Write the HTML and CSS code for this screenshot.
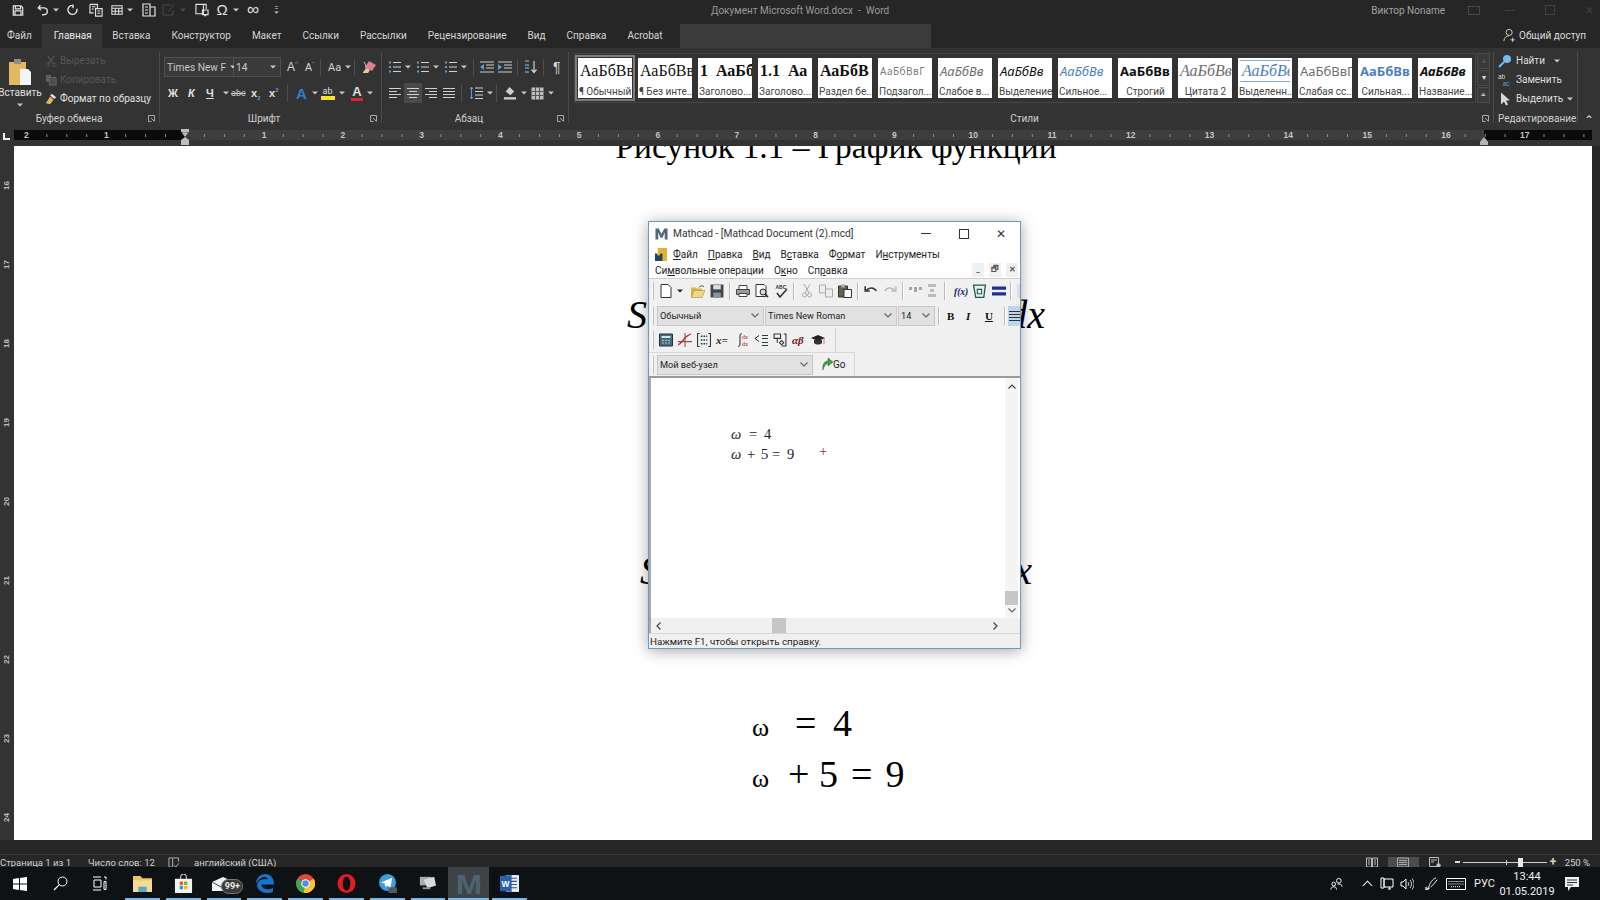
FILE: index.html
```html
<!DOCTYPE html>
<html lang="ru">
<head>
<meta charset="utf-8">
<title>Документ Microsoft Word.docx - Word</title>
<link rel="stylesheet" href="styles.css">
</head>
<body>
<svg class="defs" width="0" height="0">
<defs>
<symbol id="save" viewBox="0 0 14 14"><path d="M1.5 1.5h9l2 2v9h-11zM4 1.5v3.5h6v-3.5M3.5 12.5v-5h7v5" fill="none" stroke="currentColor" stroke-width="1.4"/></symbol>
<symbol id="undo" viewBox="0 0 14 14"><path d="M4 1.5l-2.5 3 3 2.5M2 4.500h6a4 4 0 0 1 0 8H6" fill="none" stroke="currentColor" stroke-width="1.6"/></symbol>
<symbol id="redo" viewBox="0 0 14 14"><path d="M7.500 1.500h-1a5.300 5.300 0 1 0 5 4M7 0.500v4.500" fill="none" stroke="currentColor" stroke-width="1.6"/></symbol>
<symbol id="docs" viewBox="0 0 16 14"><path d="M1 1h8v4M1 1v9h4M3 3.500h4M3 6h2M7 5.500h7v8H7zM9 8h3M9 10.500h3" fill="none" stroke="currentColor" stroke-width="1.2"/></symbol>
<symbol id="table" viewBox="0 0 14 14"><path d="M1 2h12v10H1zM1 5h12M1 8.500h12M5 5v7M9 5v7" fill="none" stroke="currentColor" stroke-width="1.200"/></symbol>
<symbol id="box" viewBox="0 0 14 14"><path d="M1 1h7v12H1zM8 4h5v9H8M3 4h3M3 7h3M3 10h3" fill="none" stroke="currentColor" stroke-width="1.200"/></symbol>
<symbol id="pen" viewBox="0 0 14 14"><path d="M1 2h8M1 2v10h10V7M6 9l6-7" fill="none" stroke="currentColor" stroke-width="1"/></symbol>
<symbol id="boxdev" viewBox="0 0 15 14"><path d="M1 1h8v10H1zM9 1h3v5M8 7h6v5H8zM10 13h2" fill="none" stroke="currentColor" stroke-width="1.200"/></symbol>
<symbol id="caretd" viewBox="0 0 6 4"><path d="M0 0.500h6L3 3.500z" fill="currentColor"/></symbol>
<symbol id="list" viewBox="0 0 14 14"><path d="M1 2.500h2M1 7h2M1 11.500h2" stroke="#5e9bd0" stroke-width="2" fill="none"/><path d="M5 2.500h8M5 7h8M5 11.500h8" stroke="currentColor" stroke-width="1.200" fill="none"/></symbol>
<symbol id="indentl" viewBox="0 0 14 12"><path d="M0 1h14M6 4h8M6 7h8M0 11h14" stroke="currentColor" fill="none"/><path d="M4 3v6L0 6z" fill="#5e9bd0"/></symbol>
<symbol id="indentr" viewBox="0 0 14 12"><path d="M0 1h14M6 4h8M6 7h8M0 11h14" stroke="currentColor" fill="none"/><path d="M0 3v6l4-3z" fill="#5e9bd0"/></symbol>
<symbol id="sort" viewBox="0 0 14 14"><path d="M1 1h4M1 5h4M1 8h4M1 12h4" stroke="#5e9bd0" stroke-width="1.500" fill="none"/><path d="M10 1v11M7.500 9.500l2.500 3 2.500-3" stroke="currentColor" stroke-width="1.200" fill="none"/></symbol>
<symbol id="alignl" viewBox="0 0 14 12"><path d="M1 1.500h12M1 4.500h8M1 7.500h12M1 10.500h8" stroke="currentColor" fill="none"/></symbol>
<symbol id="alignc" viewBox="0 0 14 12"><path d="M1 1.500h12M3 4.500h8M1 7.500h12M3 10.500h8" stroke="currentColor" fill="none"/></symbol>
<symbol id="alignr" viewBox="0 0 14 12"><path d="M1 1.500h12M5 4.500h8M1 7.500h12M5 10.500h8" stroke="currentColor" fill="none"/></symbol>
<symbol id="alignj" viewBox="0 0 14 12"><path d="M1 1.500h12M1 4.500h12M1 7.500h12M1 10.500h12" stroke="currentColor" fill="none"/></symbol>
<symbol id="spacing" viewBox="0 0 14 14"><path d="M6 2h8M6 5.500h8M6 9h8M6 12.500h8" stroke="currentColor" fill="none"/><path d="M2.500 1v12M1 3l1.500-2 1.500 2M1 11l1.500 2 1.500-2" stroke="#5e9bd0" fill="none"/></symbol>
<symbol id="fill" viewBox="0 0 15 15"><path d="M7 1l5 5-4 4-5-4z" fill="#cfcfcf"/><path d="M1 12h13v2.500H1z" fill="#d0d0d0"/></symbol>
<symbol id="grid" viewBox="0 0 13 13"><path d="M0.500 0.500h12v12h-12z" fill="#bdbdbd"/><path d="M0.500 4.500h12M0.500 8.500h12M4.500 0.500v12M8.500 0.500v12" stroke="#555" fill="none"/></symbol>
<symbol id="eraser" viewBox="0 0 16 16"><path d="M8 2L15 6 11 12 4 8z" fill="#e07f86"/><path d="M2 13l4-4 3 2-2 3H2z" fill="#e9c7a0"/><path d="M3 3c2 3 3 5 1 9" stroke="#c9c9c9" fill="none"/></symbol>
<symbol id="scissor" viewBox="0 0 14 14"><path d="M3 1l7 9M11 1L4 10" stroke="currentColor" stroke-width="1.200" fill="none"/><circle cx="3" cy="11.500" r="2" fill="none" stroke="currentColor"/><circle cx="11" cy="11.500" r="2" fill="none" stroke="currentColor"/></symbol>
<symbol id="copy" viewBox="0 0 14 14"><path d="M1 1h6v8H1z" fill="#5f5f5f"/><path d="M5 4h8v9H5z" fill="#4c4c4c" stroke="#6a6a6a"/></symbol>
<symbol id="brush" viewBox="0 0 14 14"><path d="M8 1l5 4-2 2-5-4z" fill="#e3e3e3"/><path d="M6 4l4 4-4 5-5-1z" fill="#e7b458"/></symbol>
<symbol id="paste" viewBox="0 0 24 28"><path d="M1 4h17v23H1z" fill="#e2b862"/><path d="M6 1h7v5H6z" fill="#8d8d8d"/><path d="M12 11h8l3 3v13H12z" fill="#f5f5f5"/></symbol>
<symbol id="launch" viewBox="0 0 7 7"><path d="M0.500 0.500h6v6M0.500 0.500v6h3" stroke="#a8a8a8" fill="none"/><path d="M3 3l3 3" stroke="#a8a8a8"/></symbol>
<symbol id="find" viewBox="0 0 14 14"><circle cx="9" cy="5" r="4" fill="#7fb7e4"/><path d="M6 8l-5 5" stroke="#7fb7e4" stroke-width="2"/></symbol>
<symbol id="replace" viewBox="0 0 15 14"><text x="0" y="6" font-size="7" fill="#d8d8d8" font-family="Liberation Sans">ab</text><text x="5" y="13" font-size="7" fill="#5e9bd0" font-family="Liberation Sans">ac</text></symbol>
<symbol id="cursor" viewBox="0 0 12 14"><path d="M2 0.500v12l3-3 2 4 2-1-2-4h4z" fill="#d9d9d9"/></symbol>
<symbol id="person" viewBox="0 0 16 16"><circle cx="7" cy="5" r="3.500" fill="none" stroke="currentColor"/><path d="M1 15c0-4 3-6 6-6M11 11v5M8.500 13.500h5" stroke="currentColor" fill="none"/></symbol>
<symbol id="win" viewBox="0 0 14 14"><path d="M0 2l6-1v5.500H0zM7 1l7-1v6.500H7zM0 7.500h6V13L0 12zM7 7.500h7V14l-7-1z" fill="#fff"/></symbol>
<symbol id="search" viewBox="0 0 15 15"><circle cx="9.500" cy="5.500" r="4.500" fill="none" stroke="#fff"/><path d="M6.300 8.700L1 14" stroke="#fff" stroke-width="1.200"/></symbol>
<symbol id="tview" viewBox="0 0 15 15"><path d="M1 1h8M1 14h8M2 4h7v7H2zM12 1h2v2.500M12 5.500h2v8h-2z" stroke="#fff" fill="none"/></symbol>
<symbol id="folder" viewBox="0 0 18 16"><path d="M0 1h7l2 2h9v13H0z" fill="#e8c56a"/><path d="M0 5h18v11H0z" fill="#f5dc94"/><path d="M5 11h8v5H5z" fill="#5aa9c2"/></symbol>
<symbol id="store" viewBox="0 0 20 20"><path d="M7 5V3a3 3 0 0 1 6 0v2" fill="none" stroke="#fff"/><path d="M1 5h18v15H1z" fill="#f2f2f2"/><path d="M6 8h3.500v3.500H6z" fill="#f25022"/><path d="M10.500 8H14v3.500h-3.500z" fill="#7fba00"/><path d="M6 12.500h3.500V16H6z" fill="#00a4ef"/><path d="M10.500 12.500H14V16h-3.500z" fill="#ffb900"/></symbol>
<symbol id="mail" viewBox="0 0 22 14"><path d="M0 5L11 0l11 5v9H0z" fill="#f2f2f2"/><path d="M0 5l11 6 11-6" fill="none" stroke="#444"/></symbol>
<symbol id="edge" viewBox="0 0 18 18"><path d="M1 9C1 3 6 0 10 0c5 0 8 4 8 10H6c0 4 6 6 11 3v4c-6 2-14 1-15-6 0-3 2-5 5-6h5c0-3-6-4-11 4z" fill="#1774cc"/></symbol>
<symbol id="chrome" viewBox="0 0 20 20"><circle cx="10" cy="10" r="10" fill="#e2463a"/><path d="M10 10L1.500 5A10 10 0 0 0 8 19.800z" fill="#3ea453"/><path d="M10 10l8.700-5A10 10 0 0 1 8 19.800z" fill="#f5c43a"/><circle cx="10" cy="10" r="4.500" fill="#fff"/><circle cx="10" cy="10" r="3.400" fill="#4a8ef0"/></symbol>
<symbol id="opera" viewBox="0 0 20 20"><ellipse cx="10" cy="10" rx="9.500" ry="10" fill="#e01c24"/><ellipse cx="10" cy="10" rx="4" ry="7.500" fill="#0e1113"/></symbol>
<symbol id="tg" viewBox="0 0 20 20"><circle cx="10" cy="9" r="9" fill="#3a9fdd"/><path d="M3 9l12-5-2 11-3-3-2 2-1-4z" fill="#fff"/><path d="M11 14h9v6h-9z" fill="#55585a"/></symbol>
<symbol id="pc" viewBox="0 0 20 20"><path d="M2 3h12v9H2z" fill="#a5adb2"/><path d="M6 6l11-3 2 9-9 3z" fill="#d6dadd"/><path d="M5 14h8v2H5z" fill="#8a9499"/></symbol>
<symbol id="mbig" viewBox="0 0 26 22"><text x="0" y="21" font-size="28" font-family="Liberation Sans" font-weight="700" fill="#52707f" textLength="26" lengthAdjust="spacingAndGlyphs">M</text></symbol>
<symbol id="word" viewBox="0 0 18 18"><path d="M6 1h12v16H6z" fill="#e7edf5"/><path d="M9 4h7M9 7h7M9 10h7M9 13h7" stroke="#2b5797"/><path d="M0 2l11-1v16L0 16z" fill="#2b5fb0"/><text x="1.500" y="12" font-size="8" font-weight="700" font-family="Liberation Sans" fill="#fff">W</text></symbol>
<symbol id="people" viewBox="0 0 14 14"><circle cx="9.500" cy="3.500" r="2.500" fill="none" stroke="#fff"/><circle cx="4" cy="7" r="2" fill="none" stroke="#fff"/><path d="M1 13c0-2 1-3 3-3s3 1 3 3M8 7c2 0 5 0 5 3" fill="none" stroke="#fff"/></symbol>
<symbol id="net" viewBox="0 0 14 14"><path d="M4 2h9v8H4zM8 12h3M9.500 10v2" fill="none" stroke="#fff"/><path d="M1 1h3v10H1z" fill="none" stroke="#fff"/></symbol>
<symbol id="vol" viewBox="0 0 14 14"><path d="M1 5h2l3-3v10l-3-3H1z" fill="none" stroke="#fff"/><path d="M8 5a3 3 0 0 1 0 4M10 3a6 6 0 0 1 0 8M12 1.500a8 8 0 0 1 0 11" fill="none" stroke="#fff" stroke-width=".8"/></symbol>
<symbol id="inkpen" viewBox="0 0 15 15"><path d="M13 1c-4 1-7 6-8 10M14 3c-2 3-5 6-7 8M5 11l-1 3M1 13c3 2 3-3 1-2s2 3 4 1" fill="none" stroke="#fff"/></symbol>
<symbol id="kbd" viewBox="0 0 20 12"><path d="M0.500 0.500h19v11h-19z" fill="none" stroke="#fff"/><path d="M2.500 3.500h15M2.500 6h15M5 8.700h10" stroke="#fff" stroke-dasharray="1 1" fill="none"/></symbol>
<symbol id="notify" viewBox="0 0 14 14"><path d="M0 0h14v10H6l-3 4v-4H0z" fill="#f0f0f0"/><path d="M2 3h10M2 5.500h10M2 8h6" stroke="#333"/></symbol>
<symbol id="read" viewBox="0 0 12 11"><path d="M0.500 1h5v9h-5zM6.500 1h5v9h-5z" fill="none" stroke="#bbb"/><path d="M2 3h2M2 5h2M2 7h2M8 3h2M8 5h2M8 7h2" stroke="#bbb"/></symbol>
<symbol id="print" viewBox="0 0 12 10"><path d="M0.500 0.500h11v9h-11zM2 3h8M2 5h8M2 7h8" fill="none" stroke="#aaa"/></symbol>
<symbol id="web" viewBox="0 0 12 11"><path d="M0.500 0.500h9v9h-9zM2 3h6M2 5h3" fill="none" stroke="#bbb"/><circle cx="9.500" cy="8.500" r="2.200" fill="#bbb"/></symbol>
<symbol id="lang" viewBox="0 0 12 12"><path d="M0.500 1h4v10h-4zM5 1h6v4M6 9l2 2 3-4" fill="none" stroke="#bbb"/></symbol>
<symbol id="mlogo" viewBox="0 0 14 13"><path d="M0.500 1h3.500l3 6 3-6h3.500v12h-3V5.500L8 11H6L3.500 5.500V13h-3z" fill="#4d6a7e"/></symbol>
<symbol id="mmenu" viewBox="0 0 14 14"><path d="M3 0h10v14H3z" fill="#e1b23a"/><path d="M0 6h2l2 3 2-3h2v8H0z" fill="#25445a"/></symbol>
<symbol id="mnew" viewBox="0 0 12 14"><path d="M1 0.500h7l3 3v10H1z" fill="#fff" stroke="#333"/></symbol>
<symbol id="mopen" viewBox="0 0 14 13"><path d="M0 3h5l1 1h5v2H4l-2 6H0z" fill="#d9b64c"/><path d="M3 6h11l-3 7H0z" fill="#f2d97f" stroke="#8c7a2e" stroke-width=".5"/><path d="M8 3c1-2 3-2 5-1" stroke="#3f6f2e" fill="none"/></symbol>
<symbol id="msave" viewBox="0 0 13 13"><path d="M0.500 0.500h12v12h-12z" fill="#3f474d"/><path d="M3 1h7v4H3z" fill="#d9dde0"/><path d="M3 8h7v5H3z" fill="#8b949a"/></symbol>
<symbol id="mprint" viewBox="0 0 14 13"><path d="M3 1h8v4H3z" fill="#fff" stroke="#444"/><path d="M0.500 5h13v5h-13z" fill="#9b9b9b" stroke="#444"/><path d="M3 9h8v3H3z" fill="#fff" stroke="#444"/></symbol>
<symbol id="mprev" viewBox="0 0 14 14"><path d="M1 0.500h8l2 2v10H1z" fill="#fff" stroke="#333"/><circle cx="8" cy="8" r="3" fill="#cde" stroke="#222"/><path d="M10 10l3 3" stroke="#222" stroke-width="1.500"/></symbol>
<symbol id="mspell" viewBox="0 0 14 14"><text x="1.500" y="5" font-size="5" font-weight="700" fill="#333" font-family="Liberation Sans">ABC</text><path d="M3 9l3 4 7-8" stroke="#333" stroke-width="1.600" fill="none"/></symbol>
<symbol id="mcut" viewBox="0 0 10 14"><path d="M2 0l5 9M8 0L3 9" stroke="#aaa" fill="none"/><circle cx="2.500" cy="11" r="2" fill="none" stroke="#aaa"/><circle cx="7.500" cy="11" r="2" fill="none" stroke="#aaa"/></symbol>
<symbol id="mcopy" viewBox="0 0 14 13"><path d="M0.500 0.500h6v8h-6zM6.500 4.500h7v8h-7z" fill="#eee" stroke="#aaa"/></symbol>
<symbol id="mpaste" viewBox="0 0 14 14"><path d="M0.500 2h9v11h-9z" fill="#66604e" stroke="#333"/><path d="M3 0.500h4v3H3z" fill="#aaa"/><path d="M6 5.500h7.500v8H6z" fill="#fff" stroke="#333"/></symbol>
<symbol id="mundo" viewBox="0 0 12 10"><path d="M1 1v4h4M1.500 5c2-3 7-4 9 0" fill="none" stroke="#2e3438" stroke-width="1.300"/></symbol>
<symbol id="mredo" viewBox="0 0 12 10"><path d="M11 1v4H7M10.500 5c-2-3-7-4-9 0" fill="none" stroke="#bbb" stroke-width="1.300"/></symbol>
<symbol id="mdist" viewBox="0 0 14 8"><path d="M0 0h3v3H0zM5 0h3v5H5zM10 0h3v3h-3z" fill="#9aa"/></symbol>
<symbol id="mdistv" viewBox="0 0 8 14"><path d="M0 0h8v3H0zM2 5h4v3H2zM0 10h8v3H0z" fill="#bbb"/></symbol>
<symbol id="mfx" viewBox="0 0 14 12"><text x="0" y="10" font-size="9.500" font-style="italic" font-weight="700" fill="#13235c" font-family="Liberation Serif">f(x)</text></symbol>
<symbol id="mcup" viewBox="0 0 13 13"><path d="M0.500 1h11l-1.500 11.500H2.500z" fill="#e4f1ee" stroke="#1f5a50" stroke-width="1.200"/><path d="M4 5h4v4H4z" fill="none" stroke="#1f5a50"/></symbol>
<symbol id="meq" viewBox="0 0 11 9"><path d="M0 1h11v2.500H0zM0 5.500h11V8H0z" fill="#1b2f9a"/></symbol>
<symbol id="mcalc" viewBox="0 0 14 13"><path d="M0.500 0.500h13v12h-13z" fill="#456b80" stroke="#1f3441"/><path d="M2.500 2.500h9v2h-9z" fill="#cfe3ea"/><path d="M3 7h8M3 9.500h8" stroke="#9fc3d1" stroke-dasharray="2 1"/></symbol>
<symbol id="mgraph" viewBox="0 0 13 13"><path d="M6.500 0v13M0 8h13" stroke="#8a5050"/><path d="M0 11c4-1 5-8 12-10" stroke="#c03030" fill="none" stroke-width="1.200"/></symbol>
<symbol id="mmatrix" viewBox="0 0 13 13"><path d="M2.500 0.500h-2v12h2M10.500 0.500h2v12h-2" stroke="#333" fill="none"/><path d="M3.500 3h6M3.500 6.500h6M3.500 10h6" stroke="#234" stroke-width="1.500" stroke-dasharray="1.500 1"/></symbol>
<symbol id="mint" viewBox="0 0 14 14"><path d="M3 13c1 1 2 0 2-2V3c0-2 1-3 2-2" stroke="#222" fill="none"/><text x="7" y="6" font-size="6" fill="#a02020" font-family="Liberation Serif">dx</text><text x="7" y="13" font-size="6" fill="#a02020" font-family="Liberation Serif">dx</text></symbol>
<symbol id="mineq" viewBox="0 0 14 13"><path d="M5 2L1 5l4 3" stroke="#222" fill="none"/><path d="M8 2h6M8 5h6M8 9h6M8 12h6" stroke="#244" stroke-width="1.200"/></symbol>
<symbol id="mprog" viewBox="0 0 13 13"><path d="M1 1h6v4H1zM6 9l2-2 2 2-2 2zM10 1h2v11h-4M4 5v4" fill="none" stroke="#333"/></symbol>
<symbol id="mgreek" viewBox="0 0 14 12"><text x="0" y="10" font-size="11" font-style="italic" font-weight="700" fill="#7a1515" font-family="Liberation Serif">αβ</text></symbol>
<symbol id="mhat" viewBox="0 0 14 12"><path d="M7 1L0 4l7 3 7-3z" fill="#222"/><path d="M3 6v3c2 2 6 2 8 0V6" fill="#333"/><path d="M13 4v6" stroke="#c77"/></symbol>
<symbol id="mgo" viewBox="0 0 12 13"><path d="M2 12C1 6 4 3 7 3V0l5 4-5 4V5.500C5 5.500 3 8 2 12z" fill="#3ea03e" stroke="#1e5c1e" stroke-width=".5"/></symbol>
<symbol id="chev-u" viewBox="0 0 8 5"><path d="M0.500 4.500L4 1l3.500 3.500" fill="none" stroke="#444" stroke-width="1.200"/></symbol>
<symbol id="chev-d" viewBox="0 0 8 5"><path d="M0.500 0.500L4 4l3.500-3.500" fill="none" stroke="#666" stroke-width="1.200"/></symbol>
<symbol id="chev-l" viewBox="0 0 5 8"><path d="M4.500 0.500L1 4l3.500 3.500" fill="none" stroke="#444" stroke-width="1.200"/></symbol>
<symbol id="chev-r" viewBox="0 0 5 8"><path d="M0.500 0.500L4 4 0.500 7.500" fill="none" stroke="#444" stroke-width="1.200"/></symbol>
</defs>
</svg>

<div class="app">
  <header class="titlebar">
    <div class="qat">
      <svg class="q q-save"><use href="#save"/></svg>
      <svg class="q q-undo"><use href="#undo"/></svg><svg class="cd"><use href="#caretd"/></svg>
      <svg class="q q-redo"><use href="#redo"/></svg>
      <svg class="q q-docs"><use href="#docs"/></svg>
      <svg class="q q-table"><use href="#table"/></svg><svg class="cd"><use href="#caretd"/></svg>
      <svg class="q q-box"><use href="#box"/></svg>
      <svg class="q q-pen"><use href="#pen"/></svg><svg class="cd dim"><use href="#caretd"/></svg>
      <svg class="q q-boxdev"><use href="#boxdev"/></svg>
      <span class="q-omega">Ω</span><svg class="cd"><use href="#caretd"/></svg>
      <span class="q-inf">∞</span>
      <span class="q-more">=<svg class="cd"><use href="#caretd"/></svg></span>
    </div>
    <div class="doc-title">Документ Microsoft Word.docx  -  Word</div>
    <div class="win-ctrl">
      <span class="user">Виктор Noname</span>
      <span class="ctl-ribbon"></span>
      <span class="ctl-min"></span>
      <span class="ctl-max"></span>
      <span class="ctl-close">✕</span>
    </div>
  </header>

  <nav class="tabs">
    <span class="tab tab-first">Файл</span>
    <span class="tab tab-on">Главная</span>
    <span class="tab">Вставка</span>
    <span class="tab">Конструктор</span>
    <span class="tab">Макет</span>
    <span class="tab">Ссылки</span>
    <span class="tab">Рассылки</span>
    <span class="tab">Рецензирование</span>
    <span class="tab">Вид</span>
    <span class="tab">Справка</span>
    <span class="tab">Acrobat</span>
    <div class="tell"></div>
    <div class="share"><svg class="share-i"><use href="#person"/></svg>Общий доступ</div>
  </nav>

  <section class="ribbon">
    <div class="grp g-clip">
      <div class="grp-body clip-body">
        <div class="paste">
          <svg class="paste-i"><use href="#paste"/></svg>
          <span>Вставить</span>
          <svg class="cd"><use href="#caretd"/></svg>
        </div>
        <div class="clip-list">
          <div class="clip-row off"><svg class="ci"><use href="#scissor"/></svg>Вырезать</div>
          <div class="clip-row off"><svg class="ci"><use href="#copy"/></svg>Копировать</div>
          <div class="clip-row"><svg class="ci"><use href="#brush"/></svg>Формат по образцу</div>
        </div>
      </div>
      <div class="grp-label l-clip"><span>Буфер обмена</span><svg class="launch"><use href="#launch"/></svg></div>
    </div>

    <div class="grp g-font">
      <div class="grp-body rows">
        <div class="row r-font1">
          <div class="fname">Times New F<svg class="cd"><use href="#caretd"/></svg></div>
          <div class="fsize">14<svg class="cd"><use href="#caretd"/></svg></div>
          <span class="fa fa-up">A<sup>^</sup></span>
          <span class="fa fa-dn">A<sup>ˇ</sup></span>
          <i class="vsep"></i>
          <span class="fcase">Aa<svg class="cd"><use href="#caretd"/></svg></span>
          <i class="vsep"></i>
          <svg class="rb16"><use href="#eraser"/></svg>
        </div>
        <div class="row r-font2">
          <b class="fb w-zh">Ж</b>
          <b class="fb fit w-k">К</b>
          <b class="fb under w-ch">Ч</b><svg class="cd"><use href="#caretd"/></svg>
          <span class="fstrike">abc</span>
          <b class="fb w-x">x<sub>2</sub></b>
          <b class="fb w-x2">x<sup>2</sup></b>
          <i class="vsep"></i>
          <b class="tfx">A</b><svg class="cd"><use href="#caretd"/></svg>
          <span class="hl"><small>ab</small><i></i></span><svg class="cd"><use href="#caretd"/></svg>
          <span class="fcolor">A<i></i></span><svg class="cd"><use href="#caretd"/></svg>
        </div>
      </div>
      <div class="grp-label l-font"><span>Шрифт</span><svg class="launch"><use href="#launch"/></svg></div>
    </div>

    <div class="grp g-para">
      <div class="grp-body rows">
        <div class="row r-para1">
          <svg class="p14 li"><use href="#list"/></svg><svg class="cd"><use href="#caretd"/></svg>
          <svg class="p14 li"><use href="#list"/></svg><svg class="cd"><use href="#caretd"/></svg>
          <svg class="p14 li"><use href="#list"/></svg><svg class="cd"><use href="#caretd"/></svg>
          <i class="vsep"></i>
          <svg class="p14"><use href="#indentl"/></svg>
          <svg class="p14"><use href="#indentr"/></svg>
          <i class="vsep"></i>
          <svg class="p14"><use href="#sort"/></svg>
          <i class="vsep"></i>
          <span class="pilcrow">¶</span>
        </div>
        <div class="row r-para2">
          <span class="al"><svg class="p14"><use href="#alignl"/></svg></span>
          <span class="al al-on"><svg class="p14"><use href="#alignc"/></svg></span>
          <span class="al"><svg class="p14"><use href="#alignr"/></svg></span>
          <span class="al"><svg class="p14"><use href="#alignj"/></svg></span>
          <i class="vsep vs-a"></i>
          <svg class="p14"><use href="#spacing"/></svg><svg class="cd"><use href="#caretd"/></svg>
          <i class="vsep vs-b"></i>
          <svg class="p14"><use href="#fill"/></svg><svg class="cd"><use href="#caretd"/></svg>
          <svg class="p13"><use href="#grid"/></svg><svg class="cd"><use href="#caretd"/></svg>
        </div>
      </div>
      <div class="grp-label l-para"><span>Абзац</span><svg class="launch"><use href="#launch"/></svg></div>
    </div>

    <div class="grp g-styles">
      <div class="grp-body styles-body">
        <div class="gallery">
          <div class="st st-on"><span class="s-t serif">АаБбВвГ</span><span class="s-l">¶ Обычный</span></div>
          <div class="st"><span class="s-t serif">АаБбВвГ</span><span class="s-l">¶ Без инте...</span></div>
          <div class="st"><span class="s-t serif bold">1 &nbsp;АаБб</span><span class="s-l">Заголово...</span></div>
          <div class="st"><span class="s-t serif bold">1.1 &nbsp;Аа</span><span class="s-l">Заголово...</span></div>
          <div class="st"><span class="s-t serif bold big">АаБбВ</span><span class="s-l">Раздел бе...</span></div>
          <div class="st"><span class="s-t sm-gray">АаБбВвГ</span><span class="s-l">Подзагол...</span></div>
          <div class="st"><span class="s-t it gray">АаБбВв</span><span class="s-l">Слабое в...</span></div>
          <div class="st"><span class="s-t it">АаБбВв</span><span class="s-l">Выделение</span></div>
          <div class="st"><span class="s-t it blue">АаБбВв</span><span class="s-l">Сильное...</span></div>
          <div class="st"><span class="s-t bold">АаБбВв</span><span class="s-l ctr">Строгий</span></div>
          <div class="st"><span class="s-t serif it gray">АаБбВв</span><span class="s-l ctr">Цитата 2</span></div>
          <div class="st"><span class="s-t serif it blue lined">АаБбВв</span><span class="s-l">Выделенн...</span></div>
          <div class="st"><span class="s-t gray caps">АаБбВвГ</span><span class="s-l">Слабая сс...</span></div>
          <div class="st"><span class="s-t blue bold caps">АаБбВв</span><span class="s-l ctr">Сильная...</span></div>
          <div class="st"><span class="s-t it bold">АаБбВв</span><span class="s-l">Название...</span></div>
        </div>
        <div class="gal-btns">
          <span class="gb">▴</span><span class="gb">▾</span><span class="gb">⩡</span>
        </div>
      </div>
      <div class="grp-label l-styles"><span>Стили</span><svg class="launch"><use href="#launch"/></svg></div>
    </div>

    <div class="grp g-edit">
      <div class="grp-body edit-body">
        <div class="ed"><svg class="ei"><use href="#find"/></svg>Найти<svg class="cd ed-cd"><use href="#caretd"/></svg></div>
        <div class="ed"><svg class="ei"><use href="#replace"/></svg>Заменить</div>
        <div class="ed"><svg class="ei"><use href="#cursor"/></svg>Выделить<svg class="cd"><use href="#caretd"/></svg></div>
      </div>
      <div class="grp-label edit-label"><span>Редактирование</span></div>
    </div>
    <div class="collapse"><span>⌃</span></div>
  </section>

  <div class="hruler">
    <span class="corner"></span>
    <div class="rstrip">
      <span class="rn rn-first">2</span>
      <span class="rn">1</span>
      <span class="rn rn-zero"></span>
      <span class="rn">1</span><span class="rn">2</span><span class="rn">3</span><span class="rn">4</span><span class="rn">5</span><span class="rn">6</span><span class="rn">7</span><span class="rn">8</span><span class="rn">9</span><span class="rn">10</span><span class="rn">11</span><span class="rn">12</span><span class="rn">13</span><span class="rn">14</span><span class="rn">15</span><span class="rn">16</span><span class="rn">17</span>
    </div>
    <i class="slider sl-left"></i>
    <i class="slider sl-right"></i>
  </div>

  <main class="workspace">
    <aside class="vruler">
      <span class="vn">16</span><span class="vn">17</span><span class="vn">18</span><span class="vn">19</span><span class="vn">20</span><span class="vn">21</span><span class="vn">22</span><span class="vn">23</span><span class="vn">24</span>
    </aside>
    <article class="page">
      <p class="caption">Рисунок 1.1 – График функции</p>
      <p class="formula f1"><i>S</i><i>dx</i></p>
      <p class="formula f2"><i>S</i><i>x</i></p>
      <div class="eq">
        <div class="eq-row e1"><span class="om">ω</span><span class="e-eq">=</span><span class="e-4">4</span></div>
        <div class="eq-row e2"><span class="om">ω</span><span class="e-pl">+</span><span class="e-5">5</span><span class="e-eq2">=</span><span class="e-9">9</span></div>
      </div>
    </article>
    <div class="vscroll"></div>
  </main>

  <footer class="statusbar">
    <span class="sb-a">Страница 1 из 1</span>
    <span class="sb-b">Число слов: 12</span>
    <svg class="sb-i"><use href="#lang"/></svg>
    <span class="sb-c">английский (США)</span>
    <div class="sb-right">
      <svg class="sb-v"><use href="#read"/></svg>
      <span class="sb-on"><svg class="sb-v"><use href="#print"/></svg></span>
      <svg class="sb-v"><use href="#web"/></svg>
      <span class="z-minus"></span>
      <span class="z-track"><i class="z-mid"></i><i class="z-thumb"></i></span>
      <span class="z-plus">+</span>
      <span class="z-val">250 %</span>
    </div>
  </footer>

  <footer class="taskbar">
    <svg class="tb t-win"><use href="#win"/></svg>
    <svg class="tb t-search"><use href="#search"/></svg>
    <svg class="tb t-view"><use href="#tview"/></svg>
    <span class="task run"><svg class="tb-app"><use href="#folder"/></svg></span>
    <span class="task run"><svg class="tb-app"><use href="#store"/></svg></span>
    <span class="task run t-mail"><svg class="tb-mail"><use href="#mail"/></svg><b class="badge">99+</b></span>
    <span class="task run"><svg class="tb-app"><use href="#edge"/></svg></span>
    <span class="task run"><svg class="tb-app"><use href="#chrome"/></svg></span>
    <span class="task run"><svg class="tb-app"><use href="#opera"/></svg></span>
    <span class="task run"><svg class="tb-app"><use href="#tg"/></svg></span>
    <span class="task run"><svg class="tb-app"><use href="#pc"/></svg></span>
    <span class="task run active"><svg class="tb-m"><use href="#mbig"/></svg></span>
    <span class="task run"><svg class="tb-app"><use href="#word"/></svg></span>
    <div class="tray">
      <svg class="tr tr-people"><use href="#people"/></svg>
      <span class="tr-caret"></span>
      <svg class="tr tr-net"><use href="#net"/></svg>
      <svg class="tr tr-vol"><use href="#vol"/></svg>
      <svg class="tr tr-pen"><use href="#inkpen"/></svg>
      <svg class="tr-kbd"><use href="#kbd"/></svg>
      <span class="tr-lang">РУС</span>
      <span class="clock"><span>13:44</span><span>01.05.2019</span></span>
      <svg class="tr tr-note"><use href="#notify"/></svg>
    </div>
  </footer>

  <div class="mc">
    <div class="mc-title">
      <svg class="mc-logo"><use href="#mlogo"/></svg>
      <span class="mc-name">Mathcad - [Mathcad Document (2).mcd]</span>
      <span class="mc-min"></span><span class="mc-max"></span><span class="mc-x">✕</span>
    </div>
    <div class="mc-menu m1">
      <svg class="mc-logo"><use href="#mmenu"/></svg>
      <span><u>Ф</u>айл</span><span><u>П</u>равка</span><span><u>В</u>ид</span><span>В<u>с</u>тавка</span><span>Ф<u>о</u>рмат</span><span>И<u>н</u>струменты</span>
    </div>
    <div class="mc-menu m2">
      <span>Си<u>м</u>вольные операции</span><span>О<u>к</u>но</span><span>Сп<u>р</u>авка</span>
      <div class="mdi"><b>_</b><b>🗗</b><b>✕</b></div>
    </div>
    <div class="mc-tb t1">
      <i class="grip"></i>
      <svg class="m-ic"><use href="#mnew"/></svg><svg class="cd m-cd"><use href="#caretd"/></svg>
      <svg class="m-ic"><use href="#mopen"/></svg><svg class="m-ic"><use href="#msave"/></svg>
      <i class="msep"></i>
      <svg class="m-ic"><use href="#mprint"/></svg><svg class="m-ic"><use href="#mprev"/></svg><svg class="m-ic"><use href="#mspell"/></svg>
      <i class="msep"></i>
      <svg class="m-ic"><use href="#mcut"/></svg><svg class="m-ic"><use href="#mcopy"/></svg><svg class="m-ic"><use href="#mpaste"/></svg>
      <i class="msep"></i>
      <svg class="m-ic"><use href="#mundo"/></svg><svg class="m-ic"><use href="#mredo"/></svg>
      <i class="msep"></i>
      <svg class="m-ic"><use href="#mdist"/></svg><svg class="m-ic m-dv"><use href="#mdistv"/></svg>
      <i class="msep sep-fx"></i>
      <svg class="m-ic"><use href="#mfx"/></svg><svg class="m-ic"><use href="#mcup"/></svg><svg class="m-ic m-eq"><use href="#meq"/></svg>
      <i class="msep"></i>
      <i class="m-cut"></i>
    </div>
    <div class="mc-tb t2">
      <i class="grip"></i>
      <div class="combo c-style">Обычный<svg class="cv"><use href="#chev-d"/></svg></div>
      <div class="combo c-font">Times New Roman<svg class="cv"><use href="#chev-d"/></svg></div>
      <div class="combo c-size">14<svg class="cv"><use href="#chev-d"/></svg></div>
      <i class="msep sep-t2"></i>
      <b class="mf">B</b><b class="mf mi">I</b><b class="mf mu">U</b>
      <i class="msep sep-t2b"></i>
      <span class="m-align"><svg class="m-ic"><use href="#alignj"/></svg></span>
    </div>
    <div class="mc-tb t3">
      <div class="t3-in">
        <i class="grip"></i>
        <svg class="m-ic"><use href="#mcalc"/></svg><svg class="m-ic"><use href="#mgraph"/></svg><svg class="m-ic"><use href="#mmatrix"/></svg>
        <span class="m-xeq">x=</span>
        <svg class="m-ic"><use href="#mint"/></svg><svg class="m-ic"><use href="#mineq"/></svg><svg class="m-ic"><use href="#mprog"/></svg><svg class="m-ic"><use href="#mgreek"/></svg><svg class="m-ic"><use href="#mhat"/></svg>
      </div>
    </div>
    <div class="mc-tb t4">
      <div class="t4-in">
        <i class="grip"></i>
        <div class="combo c-web">Мой веб-узел<svg class="cv"><use href="#chev-d"/></svg></div>
        <svg class="m-go"><use href="#mgo"/></svg><span class="go">Go</span>
      </div>
    </div>
    <div class="mc-work">
      <div class="mc-main">
        <div class="sheet">
          <div class="m-line l1"><i>ω</i><span class="s1">=</span><span class="s2">4</span></div>
          <div class="m-line l2"><i>ω</i><span class="s3">+</span><span class="s4">5</span><span class="s5">=</span><span class="s6">9</span><span class="mc-cross">+</span></div>
        </div>
        <div class="mc-vs">
          <svg class="cu"><use href="#chev-u"/></svg>
          <i class="mc-vthumb"></i>
          <svg class="cu"><use href="#chev-d"/></svg>
        </div>
      </div>
      <div class="mc-hs">
        <svg class="cl"><use href="#chev-l"/></svg>
        <i class="mc-hthumb"></i>
        <svg class="cl"><use href="#chev-r"/></svg>
      </div>
    </div>
    <div class="mc-status">Нажмите F1, чтобы открыть справку.</div>
  </div>
</div>
</body>
</html>
```

FILE: styles.css
```css
*{box-sizing:border-box}
html,body{margin:0;padding:0}
body{background:#1e1e1e;font-family:Roboto,"Noto Sans",sans-serif}
.defs{position:absolute}
.app{position:relative;width:1600px;height:900px;overflow:hidden;display:flex;flex-direction:column;background:#262626;color:#d6d6d6}

/* title bar */
.titlebar{height:24px;background:#262626;display:grid;grid-template-columns:1fr auto 1fr;align-items:center;flex:none;padding-bottom:10px}
.doc-title{font-size:10px;color:#9a9a9a;white-space:pre}
.qat{display:flex;align-items:center;padding-left:12px;color:#e3e3e3}
.q{width:14px;height:14px;flex:none}
.q-save{width:12px;height:13px}
.q-undo{margin-left:13px;width:12px}
.q-redo{margin-left:8px;width:12px}
.q-docs{margin-left:10px;width:15px}
.q-table{margin-left:7px;width:12px}
.q-box{margin-left:9px}
.q-pen{margin-left:6px;color:#4b4b4b}
.q-boxdev{margin-left:9px}
.cd{width:6px;height:4px;flex:none;margin-left:4px;color:#c8c8c8}
.cd.dim{color:#4b4b4b}
.q-omega{font:15px/16px "Liberation Sans",sans-serif;margin-left:6px;width:14px;text-align:center}
.q-inf{font:17px/20px "Liberation Sans",sans-serif;margin-left:7px;width:14px;text-align:center}
.q-more{margin-left:14px;display:flex;flex-direction:column;font-size:7px;line-height:5px;align-items:center}
.q-more .cd{margin:0;width:5px;height:3px}
.win-ctrl{display:flex;align-items:center;justify-content:flex-end;color:#a3a3a3;font-size:10px;height:16px}
.user{margin-right:23px}
.ctl-ribbon{width:12px;height:9px;border:1px solid #4a4a4a;margin-right:25px}
.ctl-min{width:10px;height:1px;background:#3f3f3f;margin-right:30px}
.ctl-max{width:10px;height:10px;border:1px solid #3f3f3f;margin-right:30px}
.ctl-close{color:#3f3f3f;font-size:11px;width:15px}

/* tabs */
.tabs{height:24px;display:flex;align-items:stretch;font-size:10px;flex:none;background:#262626;color:#d5d5d5}
.tab{display:flex;align-items:center;padding:0 10.500px 2px;white-space:nowrap}
.tab-first{padding:0 10px 2px 7px}
.tab-on{background:#353535;color:#e8e8e8;padding:0 10px 2px 12px}
.tell{width:251px;background:#3b3b3b;margin-left:7px}
.share{margin-left:auto;display:flex;align-items:center;padding:0 14px 2px 0;color:#dcdcdc}
.share-i{width:14px;height:14px;margin-right:2px}

/* ribbon */
.ribbon{height:81px;background:#333;display:flex;flex:none;font-size:10px}
.grp{display:flex;flex-direction:column;flex:none;position:relative}
.grp::after{content:"";position:absolute;right:0;top:4px;bottom:6px;width:1px;background:#4b4b4b}
.grp-body{height:62px}
.grp-label{height:16px;display:flex;align-items:center;justify-content:center;font-size:10px;color:#cfcfcf;position:relative}
.l-clip{padding-right:22px}
.l-font{padding-right:14px}
.l-para{padding-right:13px}
.l-styles{padding-right:14px}
.launch{position:absolute;right:5px;top:5px;width:7px;height:7px}
.g-clip{width:160px}
.g-font{width:222px}
.g-para{width:187px}
.g-styles{width:925px}
.g-edit{width:84px}
.collapse{flex:1;display:flex;align-items:flex-end;justify-content:center;font-size:12px;padding-bottom:2px}
.clip-body{display:flex}
.paste{width:40px;display:flex;flex-direction:column;align-items:center;padding-top:10px;font-size:10px;color:#e0e0e0}
.paste-i{width:24px;height:28px;margin-bottom:1px}
.paste .cd{margin:5px 0 0}
.clip-list{padding:3px 0 0 5px;font-size:10px}
.clip-row{height:19px;display:flex;align-items:center;white-space:nowrap;color:#e0e0e0}
.clip-row.off{color:#565656}
.ci{width:12px;height:12px;margin-right:3px;flex:none}

.rows{padding:9px 0 0 4px;display:flex;flex-direction:column;gap:6px}
.row{height:20px;display:flex;align-items:center;flex:none;white-space:nowrap}
.vsep{width:1px;height:17px;background:#4d4d4d;flex:none}
.fname,.fsize{height:20px;border:1px solid #505050;background:#3a3a3a;font-size:10.200px;display:flex;align-items:center;padding-left:2px;justify-content:space-between;padding-right:4px;color:#c8c8c8}
.fname{width:70px}
.fsize{width:47px;border-left:0}
.fa{font-size:12px;font-family:"Liberation Sans",sans-serif;color:#d6d6d6;display:inline-flex}
.fa sup{font-size:7px;line-height:8px;color:#5e9bd0}
.fa-up{margin-left:6px;width:16px}
.fa-dn{margin-left:2px;width:9px;font-size:10.500px}
.r-font1 .vsep{margin:0 6px}
.fcase{font-size:11px;display:inline-flex;align-items:center;margin-left:1px;width:20px}
.rb16{width:16px;height:16px;flex:none}
.fb{font:700 11px "Liberation Sans",sans-serif;color:#e0e0e0}
.w-zh{margin-left:4px;width:20px}
.w-k{width:18px}
.fit{font-style:italic}
.under{text-decoration:underline;width:13px}
.fstrike{font-size:9px;text-decoration:line-through;margin-left:2px;width:20px;color:#d0d0d0}
.w-x{width:18px}
.w-x2{width:16px}
.fb sub,.fb sup{font-size:6px;line-height:0;color:#5e9bd0}
.r-font2 .vsep{margin:0 8px 0 2px}
.tfx{font:700 15px "Liberation Sans",sans-serif;color:#2f7ecb;width:12px}
.hl{display:inline-flex;flex-direction:column;width:15px;margin-left:2px;align-items:center;line-height:9px}
.hl small{font-size:9px;color:#dedede}
.hl i{width:14px;height:4px;background:#f2e233}
.fcolor{display:inline-flex;flex-direction:column;width:12px;margin-left:6px;align-items:center;font:700 13px/12px "Liberation Sans",sans-serif;color:#ddd}
.fcolor i{width:12px;height:3px;background:#d8262e}
.p14{width:14px;height:14px;flex:none;color:#d0d0d0}
.p13{width:13px;height:13px;flex:none;margin-left:4px}
.r-para1{padding-left:2px}
.r-para1 .p14{margin-right:4px}
.r-para1 .li{margin-right:0}
.r-para1 .cd{margin:0 5px 0 3px}
.r-para1 .vsep{margin:0 6px 0 1px}
.pilcrow{font:14px "Liberation Sans",sans-serif;margin-left:3px}
.al{width:18px;height:20px;display:flex;align-items:center;justify-content:center;flex:none}
.al-on{background:#4a4a4a}
.vs-a{margin:0 7px 0 3px}
.vs-b{margin:0 6px 0 3px}
.styles-body{display:flex;padding:5px 0 0 5px}
.gallery{width:902px;height:50px;border:1px solid #464646;display:flex;gap:6px;padding:4px 3px}
.st{width:54px;height:40px;background:#fff;flex:none;display:flex;flex-direction:column;color:#111;overflow:hidden;outline:0}
.st-on{outline:2px solid #7d7d7d;outline-offset:1px}
.s-t{height:27px;line-height:26px;font-size:13px;white-space:nowrap;overflow:hidden;padding-left:2px;font-family:"Noto Sans",sans-serif;flex:none}
.serif{font-family:"Liberation Serif",serif;font-size:16px}
.bold{font-weight:700}
.big{font-size:16px}
.it{font-style:italic}
.gray{color:#6f6f6f}
.blue{color:#4f81bd}
.sm-gray{font-size:10px;color:#7b7b7b;letter-spacing:.5px}
.caps{font-size:13px}
.lined{border-top:1px solid #8aa7cc;border-bottom:1px solid #8aa7cc;height:22px;line-height:20px;margin:2px 2px 3px}
.s-l{font-size:10px;line-height:13px;color:#444;white-space:nowrap;overflow:hidden;padding-left:1px}
.ctr{text-align:center}
.gal-btns{width:13px;margin-left:1px;display:flex;flex-direction:column;gap:1px}
.gb{height:16px;background:#3a3a3a;border:1px solid #4a4a4a;font:8px/14px "Liberation Sans",sans-serif;text-align:center;color:#ddd}
.gb:first-child{color:#555}
.edit-body{padding:3px 0 0 4px;font-size:10px}
.ed{height:19px;display:flex;align-items:center;color:#dedede;white-space:nowrap}
.ei{width:14px;height:14px;margin-right:4px;flex:none}
.ed-cd{margin-left:9px}
.edit-label{justify-content:flex-start;padding-left:4px;white-space:nowrap}

/* rulers */
.hruler{height:17px;flex:none;display:flex;background:#333;color:#c8c8c8;position:relative}
.corner{width:14px;height:16px;background:#333;flex:none;position:relative}
.corner::before{content:"";position:absolute;left:3px;top:4px;width:5px;height:5px;border-left:2px solid #eee;border-bottom:2px solid #eee}
.rstrip{flex:none;width:1578px;height:10px;margin-top:1px;display:flex;font:700 8.500px/11px "Liberation Sans",sans-serif;color:#c4c4c4;background-image:
 linear-gradient(90deg,transparent 0 19px,#8a8a8a 19px 20px,transparent 20px 39px,#8a8a8a 39px 40px,transparent 40px 59px,#8a8a8a 59px 60px,transparent 60px),
 linear-gradient(90deg,#0b0b0b 0 171px,#3e3e3e 171px 1470px,#0b0b0b 1470px);
 background-size:78.800px 3px,100% 100%;background-position:171px 4px,0 0;background-repeat:repeat-x,no-repeat}
.rn{width:78.800px;text-align:center;flex:none}
.rn-first{width:53px;text-align:left;padding-left:10px}
.slider{position:absolute;top:0;width:8px;height:16px}
.sl-left{left:181px;background:linear-gradient(#bdbdbd 0 3px,#8a8a8a 3px 4px,#bdbdbd 4px);clip-path:polygon(0 0,100% 0,100% 15%,50% 50%,100% 68%,100% 100%,0 100%,0 68%,50% 50%,0 15%)}
.sl-right{left:1480px;background:#b5b5b5;clip-path:polygon(50% 50%,100% 80%,100% 100%,0 100%,0 80%)}
.workspace{flex:none;height:694px;display:flex;background:#262626}
.vruler{width:14px;flex:none;background:#333;display:flex;flex-direction:column;color:#bdbdbd}
.vn{height:79px;flex:none;font:700 8px/14px "Liberation Sans",sans-serif;writing-mode:vertical-rl;transform:rotate(180deg);text-align:center}
.page{width:1578px;flex:none;background:#fff;color:#000;font-family:"Liberation Serif",serif;padding-left:66px;display:flex;flex-direction:column;align-items:center;overflow:hidden}
.page p{margin:0}
.caption{font-size:33.500px;line-height:40px;margin-top:-19px!important;white-space:nowrap}
.formula{display:flex;justify-content:space-between;font-size:40px;line-height:46px}
.f1{width:418px;margin-top:125px!important}
.f2{width:392px;margin-top:210px!important}
.eq{align-self:flex-start;margin-left:672px;margin-top:106px}
.eq-row{display:flex;align-items:baseline;font-size:38px;line-height:47px}
.om{font-size:26px;width:18px}
.e-eq{margin-left:25px;width:21px}
.e-4{margin-left:17px}
.e-pl{margin-left:18px;width:22px}
.e-5{margin-left:9px}
.e-eq2{margin-left:13px}
.e-9{margin-left:13px}
.vscroll{flex:1;background:#262626}

/* status */
.statusbar{height:27px;flex:none;padding-top:17px;display:flex;align-items:center;font-size:9.500px;background:linear-gradient(#262626 0 14px,#3a3a3a 14px 15px,#262626 15px);color:#cfcfcf;white-space:nowrap}
.sb-a{width:88px}
.sb-b{width:80px}
.sb-i{width:12px;height:11px;margin-right:14px}
.sb-right{margin-left:auto;display:flex;align-items:center;padding-right:10px}
.sb-v{width:12px;height:11px;flex:none}
.sb-on{width:31px;height:11px;background:#4c4c4c;display:flex;justify-content:center;margin:0 10px}
.z-minus{width:5px;height:1.500px;background:#ddd;margin-left:14px}
.z-track{width:84px;height:1px;background:#cfcfcf;margin-left:3px;position:relative}
.z-mid{position:absolute;left:43px;top:-2px;width:1px;height:5px;background:#cfcfcf}
.z-thumb{position:absolute;left:55px;top:-4px;width:5px;height:9px;background:#e8e8e8}
.z-plus{margin-left:3px;font-size:12px;width:8px;line-height:10px;font-weight:700}
.z-val{margin-left:7px}

/* taskbar */
.taskbar{height:33px;flex:none;background:#0e1215;display:flex;align-items:stretch;position:relative;padding-left:13px}
.tb{flex:none;align-self:center}
.t-win{width:14px;height:14px}
.t-search{width:15px;height:15px;margin-left:26px}
.t-view{width:15px;height:15px;margin-left:24px;margin-right:15px}
.task{width:40.800px;height:33px;display:flex;align-items:center;justify-content:center;flex:none;position:relative}
.run::after{content:"";position:absolute;left:3px;right:3px;bottom:0;height:2px;background:#76b9ed}
.active{background:#3f4346}
.active::after{left:0;right:0}
.tb-app{width:19px;height:19px}
.tb-mail{width:22px;height:14px;margin-right:2px}
.tb-m{width:26px;height:22px;opacity:.75}
.badge{position:absolute;right:1px;top:12px;width:22px;height:15px;border-radius:8px;background:#3a3a3a;border:1px solid #777;font:700 9px/13px Roboto,sans-serif;text-align:center;color:#eee}
.tray{margin-left:auto;display:flex;align-items:center;padding-right:21px;color:#f0f0f0}
.tr{width:14px;height:14px;flex:none}
.tr-caret{width:7px;height:7px;border-left:1px solid #eee;border-top:1px solid #eee;transform:rotate(45deg);margin:4px 5px 0 21px}
.tr-people{width:13px}
.tr-net{margin-left:4px}
.tr-vol{margin-left:6px}
.tr-pen{margin-left:10px}
.tr-kbd{width:20px;height:12px;margin-left:8px}
.tr-lang{font-size:11px;margin-left:8px}
.clock{display:flex;flex-direction:column;align-items:center;font-size:11px;line-height:15px;margin-left:9px;width:46px}
.tr-note{margin-left:15px}

/* Mathcad window */
.mc{position:absolute;left:648px;top:221px;width:373px;height:428px;background:#f0f0f0;border:1px solid #6e9ac0;box-shadow:0 2px 14px rgba(0,0,0,.35);display:flex;flex-direction:column;color:#222;font-size:10px;font-family:Roboto,"Noto Sans",sans-serif}
.mc-title{height:23px;background:#fff;display:flex;align-items:center;padding-left:6px;flex:none}
.mc-logo{width:13px;height:13px;flex:none}
.mc-name{margin-left:5px;color:#333;font-size:10.200px;white-space:nowrap}
.mc-min{width:10px;height:1px;background:#333;margin-left:auto}
.mc-max{width:10px;height:10px;border:1px solid #333;margin-left:28px}
.mc-x{margin-left:27px;width:24px;font-size:12px;color:#333}
.mc-menu{height:16px;flex:none;background:#fff;display:flex;align-items:center;padding-left:6px;white-space:nowrap;font-size:10px}
.m1{height:17px;padding-top:1px}
.m1 span{margin-left:10px}
.m1 span:first-of-type{margin-left:5px}
.m2{height:17px;border-bottom:1px solid #cfcfcf}
.m2 span{margin-right:10px}
.mdi{margin-left:auto;display:flex;gap:5px;padding-right:2px}
.mdi b{width:12px;height:14px;font-size:8px;line-height:14px;text-align:center;background:#f0f0f0;color:#555;font-weight:700}
.mc-tb{height:24px;flex:none;display:flex;align-items:center;overflow:hidden;background:#f0f0f0}
.grip{width:2px;height:18px;border-left:1px solid #fff;border-right:1px solid #bbb;margin:0 5px 0 3px;flex:none}
.m-ic{width:14px;height:14px;flex:none;margin-right:5px}
.m-cd{margin:0 8px 0 -1px;color:#222}
.msep{width:2px;height:18px;border-left:1px solid #bbb;border-right:1px solid #fff;margin:0 5px 0 0;flex:none}
.sep-fx{margin-right:8px}
.m-dv{margin-left:-3px}
.m-eq{margin-right:4px}
.m-cut{width:14px;height:14px;background:#ddd;flex:none}
.t2{height:25px}
.t2 .grip{margin-right:3px}
.combo{height:20px;flex:none;background:#e1e1e1;border:1px solid #c8c8c8;display:flex;align-items:center;justify-content:space-between;padding:0 4px 0 2px;font-size:9.200px;color:#222;white-space:nowrap}
.cv{width:8px;height:5px;flex:none}
.c-style{width:107px}
.c-font{width:132px;margin-left:1px}
.c-size{width:37px;margin-left:1px}
.sep-t2{margin:0 6px 0 3px}
.sep-t2b{margin:0 2px 0 6px}
.mf{font:700 11px "Liberation Serif",serif;width:19px;padding-left:1px;flex:none;color:#111}
.mi{font-style:italic}
.mu{text-decoration:underline;width:14px}
.m-align{width:16px;height:20px;background:#bcd7ec;flex:none;display:flex;align-items:center;color:#333}
.t3-in{height:24px;display:flex;align-items:center;border-right:1px solid #cfcfcf;padding-right:5px}
.m-xeq{font:italic 700 11px "Liberation Serif",serif;color:#222;width:14px;margin-right:5px}
.t4-in{height:24px;display:flex;align-items:center;border-top:1px solid #d8d8d8;border-right:1px solid #d8d8d8;width:206px}
.t4 .grip{margin-right:3px}
.c-web{width:156px}
.m-go{width:12px;height:13px;margin-left:8px;flex:none}
.go{font-size:10px}
.mc-work{flex:1;display:flex;flex-direction:column;border-top:2px solid #9a9a9a;border-left:2px solid #a9a9a9;min-height:0}
.mc-main{flex:1;display:flex;background:#fff;min-height:0}
.sheet{flex:1;padding:46px 0 0 80px;font-family:"Liberation Serif",serif;font-size:14.500px;color:#222}
.m-line{display:flex;height:20px;align-items:center}
.m-line i{width:11px}
.s1{margin-left:7px;width:9px}
.s2{margin-left:6px}
.s3{margin-left:5px;width:9px}
.s4{margin-left:5px;width:9px}
.s5{margin-left:2px;width:9px}
.s6{margin-left:6px}
.mc-cross{color:#a03030;margin-left:25px;font-size:14px;margin-bottom:5px}
.mc-vs{width:13px;margin-right:2px;display:flex;flex-direction:column;align-items:center;justify-content:flex-end;background:#f4f4f4;position:relative}
.cu{width:8px;height:5px;flex:none;margin-bottom:5px}
.mc-vs .cu:first-child{margin-bottom:auto;margin-top:6px}
.mc-vthumb{width:13px;height:14px;background:#c6c6c6;margin-bottom:3px}
.mc-hs{height:15px;display:flex;align-items:center;background:#f0f0f0;padding:0 22px 0 5px;flex:none}
.cl{width:5px;height:8px;flex:none}
.mc-hthumb{width:14px;height:15px;background:#c6c6c6;margin-left:111px;margin-right:auto}
.mc-status{height:15px;flex:none;font-size:9.800px;padding-left:1px;line-height:15px;border-top:1px solid #d8d8d8;color:#222}
```
